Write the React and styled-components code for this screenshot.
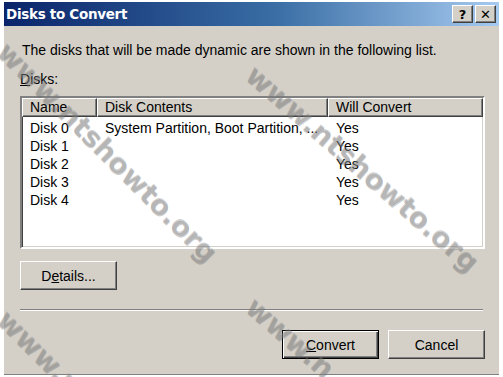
import React from 'react';
import styled, { createGlobalStyle } from 'styled-components';

const GlobalStyle = createGlobalStyle`
  html, body {
    margin: 0;
    padding: 0;
    background: #ffffff;
  }
  body {
    font-family: 'Liberation Sans', Arial, sans-serif;
  }
`;

const Stage = styled.div`
  position: relative;
  width: 503px;
  height: 377px;
  overflow: hidden;
  padding: 2px 4px 3px 4px;
  box-sizing: border-box;
`;

const Window = styled.div`
  height: 100%;
  background: #d4d0c8;
  display: flex;
  flex-direction: column;
  border-bottom: 1px solid #808080;
`;

const TitleBar = styled.div`
  height: 24px;
  flex: none;
  display: flex;
  align-items: center;
  justify-content: space-between;
  padding: 0 3px 0 2px;
  background: linear-gradient(to right, #0a246a 0%, #3a6ea5 55%, #a6caf0 100%);
`;

const Title = styled.span`
  color: #ffffff;
  font-family: 'DejaVu Sans', sans-serif;
  font-weight: bold;
  font-size: 13.5px;
  letter-spacing: -0.3px;
`;

const Caps = styled.div`
  display: flex;
  gap: 2px;
`;

const CapButton = styled.div`
  width: 21px;
  height: 18px;
  box-sizing: border-box;
  background: #d4d0c8;
  border: 1px solid;
  border-color: #ffffff #404040 #404040 #ffffff;
  box-shadow: inset -1px -1px 0 #808080;
  display: flex;
  align-items: center;
  justify-content: center;
  font-family: 'DejaVu Sans', sans-serif;
  font-weight: bold;
  font-size: 13px;
  color: #000;
`;

const Body = styled.div`
  flex: 1;
  display: flex;
  flex-direction: column;
  padding: 15px 14px 0 16px;
  font-size: 14px;
  color: #000;
`;

const Intro = styled.p`
  margin: 0 0 0 2px;
  line-height: 18px;
`;

const Label = styled.div`
  margin: 12px 0 0 0;
  line-height: 17px;
`;

const Key = styled.span`
  text-decoration: underline;
`;

const ListBox = styled.div`
  margin-top: 8px;
  height: 153px;
  flex: none;
  box-sizing: border-box;
  background: #ffffff;
  border: 2px solid;
  border-color: #808080 #ffffff #ffffff #808080;
  box-shadow: inset 1px 1px 0 #404040, inset -1px -1px 0 #d4d0c8;
`;

const Columns = '75px 231px 155px';

const Header = styled.div`
  display: grid;
  grid-template-columns: ${Columns};
  height: 19px;
`;

const HeaderCell = styled.div`
  box-sizing: border-box;
  background: #d4d0c8;
  border: 1px solid;
  border-color: #ffffff #404040 #404040 #ffffff;
  box-shadow: inset -1px -1px 0 #808080;
  padding: 0 0 0 7px;
  line-height: 17px;
  white-space: nowrap;
  overflow: hidden;
`;

const Rows = styled.div`
  padding-top: 2px;
`;

const Row = styled.div`
  display: grid;
  grid-template-columns: ${Columns};
  height: 18px;
  line-height: 18px;
`;

const Cell = styled.div`
  padding-left: 8px;
  white-space: nowrap;
`;

const Button = styled.div`
  width: 97px;
  height: 29px;
  box-sizing: border-box;
  background: #d4d0c8;
  border: 1px solid;
  border-color: ${p => (p.$default ? '#000' : '#ffffff #404040 #404040 #ffffff')};
  box-shadow: ${p =>
    p.$default
      ? 'inset 1px 1px 0 #ffffff, inset -1px -1px 0 #404040, inset -2px -2px 0 #808080'
      : 'inset -1px -1px 0 #808080'};
  display: flex;
  align-items: center;
  justify-content: center;
`;

const DetailsRow = styled.div`
  margin-top: 12px;
`;

const Separator = styled.div`
  margin: 19px 2px 0 0;
  height: 0;
  border-top: 1px solid #808080;
  border-bottom: 1px solid #ffffff;
`;

const Footer = styled.div`
  margin-top: 19px;
  display: flex;
  justify-content: flex-end;
  gap: 9px;
  padding-right: 0;
`;

const Watermark = styled.span`
  position: absolute;
  left: ${p => p.$x}px;
  top: ${p => p.$y}px;
  transform: rotate(${p => p.$angle}deg);
  transform-origin: left center;
  font-family: 'DejaVu Sans', sans-serif;
  font-weight: bold;
  font-size: 28px;
  color: rgba(140, 140, 140, 0.4);
  text-shadow: 1px 1px 0 rgba(90, 90, 90, 0.3);
  white-space: nowrap;
  pointer-events: none;
`;

const disks = [
  { name: 'Disk 0', contents: 'System Partition, Boot Partition, ...', convert: 'Yes' },
  { name: 'Disk 1', contents: '', convert: 'Yes' },
  { name: 'Disk 2', contents: '', convert: 'Yes' },
  { name: 'Disk 3', contents: '', convert: 'Yes' },
  { name: 'Disk 4', contents: '', convert: 'Yes' },
];

const marks = [
  { x: 2, y: 30, angle: 45, text: 'www.ntshowto.org' },
  { x: 250, y: 54, angle: 41, text: 'www.ntshowto.org' },
  { x: 2, y: 298, angle: 45, text: 'www.n' },
  { x: 250, y: 286, angle: 41, text: 'www.n' },
];

export default function App() {
  return (
    <Stage>
      <GlobalStyle />
      <Window>
        <TitleBar>
          <Title>Disks to Convert</Title>
          <Caps>
            <CapButton>?</CapButton>
            <CapButton>✕</CapButton>
          </Caps>
        </TitleBar>
        <Body>
          <Intro>The disks that will be made dynamic are shown in the following list.</Intro>
          <Label><Key>D</Key>isks:</Label>
          <ListBox>
            <Header>
              <HeaderCell>Name</HeaderCell>
              <HeaderCell>Disk Contents</HeaderCell>
              <HeaderCell>Will Convert</HeaderCell>
            </Header>
            <Rows>
              {disks.map(d => (
                <Row key={d.name}>
                  <Cell>{d.name}</Cell>
                  <Cell>{d.contents}</Cell>
                  <Cell>{d.convert}</Cell>
                </Row>
              ))}
            </Rows>
          </ListBox>
          <DetailsRow>
            <Button>D<Key>e</Key>tails...</Button>
          </DetailsRow>
          <Separator />
          <Footer>
            <Button $default><Key>C</Key>onvert</Button>
            <Button>Cancel</Button>
          </Footer>
        </Body>
      </Window>
      {marks.map((m, i) => (
        <Watermark key={i} $x={m.x} $y={m.y} $angle={m.angle}>{m.text}</Watermark>
      ))}
    </Stage>
  );
}
